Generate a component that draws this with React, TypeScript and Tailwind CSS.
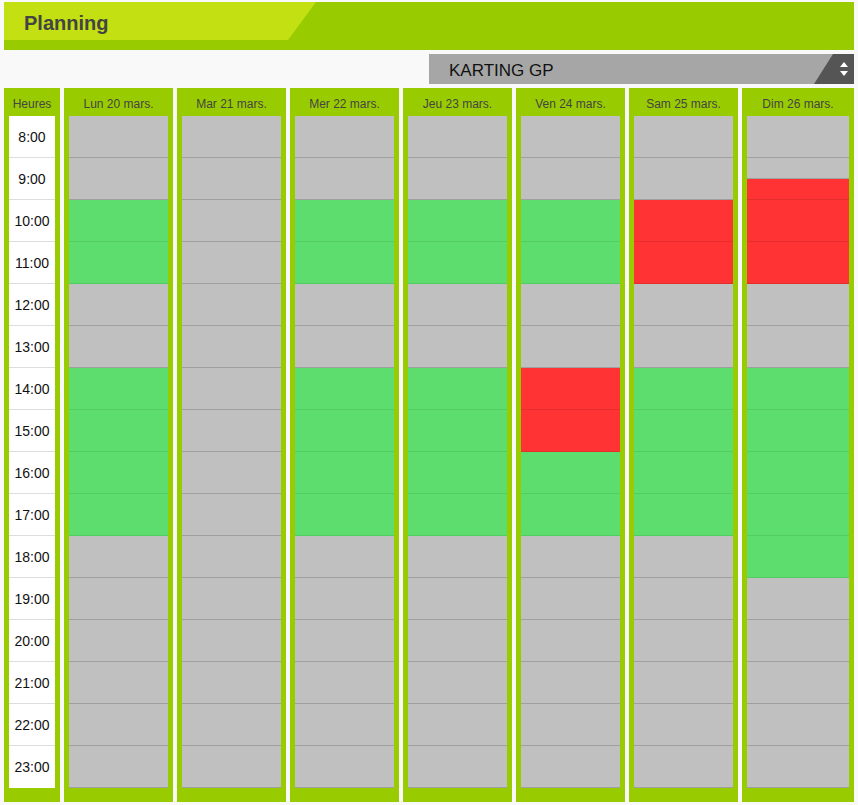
type Slot = 'free' | 'open' | 'busy'

const HOURS = Array.from({ length: 16 }, (_, i) => i + 8)

// plages ouvertes (vert) et réservées (rouge) par jour
const DAYS: { label: string; open: number[]; busy: number[]; halfBusy?: number }[] = [
  { label: 'Lun 20 mars.', open: [10, 11, 14, 15, 16, 17], busy: [] },
  { label: 'Mar 21 mars.', open: [], busy: [] },
  { label: 'Mer 22 mars.', open: [10, 11, 14, 15, 16, 17], busy: [] },
  { label: 'Jeu 23 mars.', open: [10, 11, 14, 15, 16, 17], busy: [] },
  { label: 'Ven 24 mars.', open: [10, 11, 16, 17], busy: [14, 15] },
  { label: 'Sam 25 mars.', open: [14, 15, 16, 17], busy: [10, 11] },
  { label: 'Dim 26 mars.', open: [14, 15, 16, 17, 18], busy: [10, 11], halfBusy: 9 },
]

const slotClass: Record<Slot, string> = {
  free: 'bg-[#c0c0c0] border-[#a0a0a0]',
  open: 'bg-[#5cdd6e] border-[#53cc63]',
  busy: 'bg-[#ff3333] border-[#e52e2e]',
}

function Cell({ slot, half }: { slot: Slot; half?: boolean }): JSX.Element {
  if (half) {
    return (
      <div className="flex h-[42px] flex-col">
        <div className={`h-[21px] border-b ${slotClass.free}`} />
        <div className={`flex-1 border-b ${slotClass.busy}`} />
      </div>
    )
  }
  return <div className={`h-[42px] border-b ${slotClass[slot]}`} />
}

export default function App(): JSX.Element {
  return (
    <div className="min-h-[805px] bg-[#f9f9f9] px-[4px] pt-[2px] font-['Liberation_Sans',Arial,sans-serif]">
      {/* bandeau titre */}
      <div className="h-[48px] bg-[#99cc00]">
        <div className="flex h-[38px] w-[312px] items-center bg-[#c2e012] pl-[20px] pt-[3px] [clip-path:polygon(0_0,100%_0,calc(100%-28px)_100%,0_100%)]">
          <h1 className="text-[20px] font-bold text-[#444]">Planning</h1>
        </div>
      </div>

      {/* sélection du circuit */}
      <div className="mt-[4px] flex justify-end">
        <div className="flex h-[30px] w-[425px] items-center bg-[#a6a6a6]">
          <span className="flex-1 pl-[20px] pt-[3px] text-[17px] text-[#111]">KARTING GP</span>
          <div className="flex h-full w-[40px] items-center justify-end bg-[#555] pr-[5px] [clip-path:polygon(19px_0,100%_0,100%_100%,0_100%)]">
            <svg width="10" height="18" viewBox="0 0 10 18" aria-hidden>
              <polygon points="5,2 9,7 1,7" fill="#fff" />
              <polygon points="1,11 9,11 5,16" fill="#fff" />
            </svg>
          </div>
        </div>
      </div>

      {/* grille */}
      <div className="mt-[4px] flex gap-[4px]">
        <div className="w-[56px] bg-[#99cc00] px-[5px] pb-[14px]">
          <div className="flex h-[28px] items-center justify-center pt-[3px] text-[12px] text-[#444]">Heures</div>
          <div className="bg-white">
            {HOURS.map((h, i) => (
              <div
                key={h}
                className={[
                  'flex h-[42px] items-center justify-center pt-[1px] text-[14px] text-[#111]',
                  i < HOURS.length - 1 ? 'border-b border-[#ddd]' : '',
                ].join(' ')}
              >
                {h}:00
              </div>
            ))}
          </div>
        </div>
        {DAYS.map((d, i) => (
          <div
            key={d.label}
            className={[
              'bg-[#99cc00] px-[5px] pb-[14px]',
              i === DAYS.length - 1 ? 'flex-1' : 'w-[109px]',
            ].join(' ')}
          >
            <div className="flex h-[28px] items-center justify-center pt-[3px] text-[12px] text-[#444]">{d.label}</div>
            {HOURS.map((h) => {
              const slot: Slot = d.busy.includes(h) ? 'busy' : d.open.includes(h) ? 'open' : 'free'
              return <Cell key={h} slot={slot} half={d.halfBusy === h} />
            })}
          </div>
        ))}
      </div>
    </div>
  )
}
